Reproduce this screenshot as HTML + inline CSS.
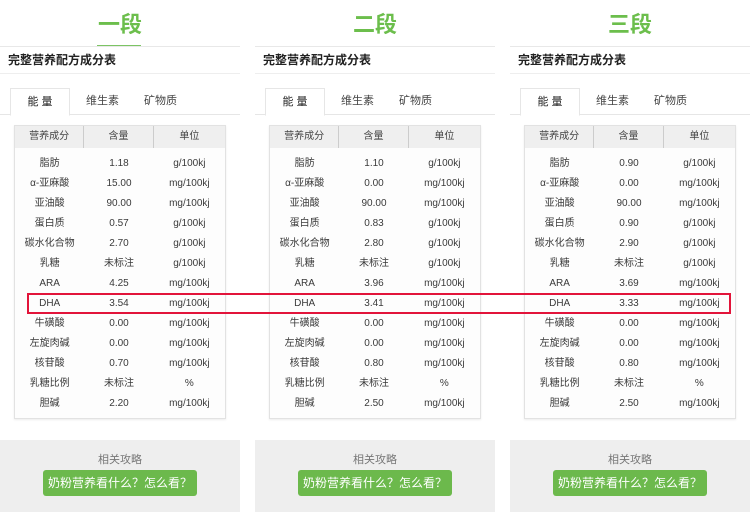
<!DOCTYPE html>
<html><head><meta charset="utf-8"><style>
*{margin:0;padding:0;box-sizing:border-box}
body{width:750px;height:512px;background:#fff;position:relative;overflow:hidden;font-family:"Liberation Sans","Noto Sans CJK SC",sans-serif;color:#333}
.p{position:absolute;top:0;width:240px;height:512px}
.h{position:absolute;top:10px;left:0;width:240px;text-align:center;font-size:22px;font-weight:bold;color:#6cbe4c;line-height:30px}
.ul{position:absolute;top:45px;left:97px;width:44px;height:2px;background:#7cc464}
.l1{position:absolute;top:46px;left:0;width:240px;height:1px;background:#e8e8e8}
.t{position:absolute;top:52px;left:8px;font-size:12px;font-weight:bold;color:#222;line-height:16px}
.l2{position:absolute;top:73px;left:0;width:240px;height:1px;background:#eee}
.tabs{position:absolute;top:88px;left:0;width:240px;height:27px;border-bottom:1px solid #e6e6e6}
.tab{position:absolute;top:0;height:27px;line-height:26px;font-size:11px;color:#444}
.tab.a{left:10px;width:60px;border:1px solid #e6e6e6;border-bottom:1px solid #fff;text-align:center;background:#fff;height:28px;color:#222}
.tb{position:absolute;top:125px;left:14px;width:212px;height:294px;border:1px solid #e2e2e2;background:#fdfdfd;box-shadow:0 1px 2px rgba(0,0,0,.08)}
.hr{display:flex;height:22px;background:#efefef;line-height:22px;font-size:10px;color:#444}
.hr div{text-align:center;border-right:1px solid #ccc}
.hr div:last-child{border:none}
.rows{padding-top:6px}
.r{display:flex;height:20px;line-height:20px;font-size:10px;color:#3a3a3a}
.c1{width:70px;text-align:center}.c2{width:70px;text-align:center}.c3{width:72px;text-align:center}
.bot{position:absolute;top:440px;left:0;width:240px;height:72px;background:#eeeeee}
.rel{position:absolute;top:451px;left:0;width:240px;text-align:center;font-size:11px;color:#777}
.btn{position:absolute;top:470px;left:43px;width:154px;height:26px;background:#6cb94c;border-radius:3px;color:#fff;font-size:12px;text-align:center;line-height:26px}
.red{position:absolute;left:27px;top:293px;width:704px;height:21px;border:2px solid #e2143a}
</style></head><body>

<div class="p" style="left:0">
<div class="h">一段</div><div class="ul"></div><div class="l1"></div>
<div class="t">完整营养配方成分表</div><div class="l2"></div>
<div class="tabs"><div class="tab a">能 量</div><div class="tab" style="left:86px">维生素</div><div class="tab" style="left:144px">矿物质</div></div>
<div class="tb"><div class="hr"><div class="c1">营养成分</div><div class="c2">含量</div><div class="c3">单位</div></div>
<div class="rows">
<div class="r"><div class="c1">脂肪</div><div class="c2">1.18</div><div class="c3">g/100kj</div></div>
<div class="r"><div class="c1">α-亚麻酸</div><div class="c2">15.00</div><div class="c3">mg/100kj</div></div>
<div class="r"><div class="c1">亚油酸</div><div class="c2">90.00</div><div class="c3">mg/100kj</div></div>
<div class="r"><div class="c1">蛋白质</div><div class="c2">0.57</div><div class="c3">g/100kj</div></div>
<div class="r"><div class="c1">碳水化合物</div><div class="c2">2.70</div><div class="c3">g/100kj</div></div>
<div class="r"><div class="c1">乳糖</div><div class="c2">未标注</div><div class="c3">g/100kj</div></div>
<div class="r"><div class="c1">ARA</div><div class="c2">4.25</div><div class="c3">mg/100kj</div></div>
<div class="r"><div class="c1">DHA</div><div class="c2">3.54</div><div class="c3">mg/100kj</div></div>
<div class="r"><div class="c1">牛磺酸</div><div class="c2">0.00</div><div class="c3">mg/100kj</div></div>
<div class="r"><div class="c1">左旋肉碱</div><div class="c2">0.00</div><div class="c3">mg/100kj</div></div>
<div class="r"><div class="c1">核苷酸</div><div class="c2">0.70</div><div class="c3">mg/100kj</div></div>
<div class="r"><div class="c1">乳糖比例</div><div class="c2">未标注</div><div class="c3">%</div></div>
<div class="r"><div class="c1">胆碱</div><div class="c2">2.20</div><div class="c3">mg/100kj</div></div>
</div></div>
<div class="bot"></div><div class="rel">相关攻略</div><div class="btn">奶粉营养看什么？怎么看？</div>
</div>

<div class="p" style="left:255px">
<div class="h">二段</div><div class="l1"></div>
<div class="t">完整营养配方成分表</div><div class="l2"></div>
<div class="tabs"><div class="tab a">能 量</div><div class="tab" style="left:86px">维生素</div><div class="tab" style="left:144px">矿物质</div></div>
<div class="tb"><div class="hr"><div class="c1">营养成分</div><div class="c2">含量</div><div class="c3">单位</div></div>
<div class="rows">
<div class="r"><div class="c1">脂肪</div><div class="c2">1.10</div><div class="c3">g/100kj</div></div>
<div class="r"><div class="c1">α-亚麻酸</div><div class="c2">0.00</div><div class="c3">mg/100kj</div></div>
<div class="r"><div class="c1">亚油酸</div><div class="c2">90.00</div><div class="c3">mg/100kj</div></div>
<div class="r"><div class="c1">蛋白质</div><div class="c2">0.83</div><div class="c3">g/100kj</div></div>
<div class="r"><div class="c1">碳水化合物</div><div class="c2">2.80</div><div class="c3">g/100kj</div></div>
<div class="r"><div class="c1">乳糖</div><div class="c2">未标注</div><div class="c3">g/100kj</div></div>
<div class="r"><div class="c1">ARA</div><div class="c2">3.96</div><div class="c3">mg/100kj</div></div>
<div class="r"><div class="c1">DHA</div><div class="c2">3.41</div><div class="c3">mg/100kj</div></div>
<div class="r"><div class="c1">牛磺酸</div><div class="c2">0.00</div><div class="c3">mg/100kj</div></div>
<div class="r"><div class="c1">左旋肉碱</div><div class="c2">0.00</div><div class="c3">mg/100kj</div></div>
<div class="r"><div class="c1">核苷酸</div><div class="c2">0.80</div><div class="c3">mg/100kj</div></div>
<div class="r"><div class="c1">乳糖比例</div><div class="c2">未标注</div><div class="c3">%</div></div>
<div class="r"><div class="c1">胆碱</div><div class="c2">2.50</div><div class="c3">mg/100kj</div></div>
</div></div>
<div class="bot"></div><div class="rel">相关攻略</div><div class="btn">奶粉营养看什么？怎么看？</div>
</div>

<div class="p" style="left:510px">
<div class="h">三段</div><div class="l1"></div>
<div class="t">完整营养配方成分表</div><div class="l2"></div>
<div class="tabs"><div class="tab a">能 量</div><div class="tab" style="left:86px">维生素</div><div class="tab" style="left:144px">矿物质</div></div>
<div class="tb"><div class="hr"><div class="c1">营养成分</div><div class="c2">含量</div><div class="c3">单位</div></div>
<div class="rows">
<div class="r"><div class="c1">脂肪</div><div class="c2">0.90</div><div class="c3">g/100kj</div></div>
<div class="r"><div class="c1">α-亚麻酸</div><div class="c2">0.00</div><div class="c3">mg/100kj</div></div>
<div class="r"><div class="c1">亚油酸</div><div class="c2">90.00</div><div class="c3">mg/100kj</div></div>
<div class="r"><div class="c1">蛋白质</div><div class="c2">0.90</div><div class="c3">g/100kj</div></div>
<div class="r"><div class="c1">碳水化合物</div><div class="c2">2.90</div><div class="c3">g/100kj</div></div>
<div class="r"><div class="c1">乳糖</div><div class="c2">未标注</div><div class="c3">g/100kj</div></div>
<div class="r"><div class="c1">ARA</div><div class="c2">3.69</div><div class="c3">mg/100kj</div></div>
<div class="r"><div class="c1">DHA</div><div class="c2">3.33</div><div class="c3">mg/100kj</div></div>
<div class="r"><div class="c1">牛磺酸</div><div class="c2">0.00</div><div class="c3">mg/100kj</div></div>
<div class="r"><div class="c1">左旋肉碱</div><div class="c2">0.00</div><div class="c3">mg/100kj</div></div>
<div class="r"><div class="c1">核苷酸</div><div class="c2">0.80</div><div class="c3">mg/100kj</div></div>
<div class="r"><div class="c1">乳糖比例</div><div class="c2">未标注</div><div class="c3">%</div></div>
<div class="r"><div class="c1">胆碱</div><div class="c2">2.50</div><div class="c3">mg/100kj</div></div>
</div></div>
<div class="bot"></div><div class="rel">相关攻略</div><div class="btn">奶粉营养看什么？怎么看？</div>
</div>

<div class="red"></div>
</body></html>
